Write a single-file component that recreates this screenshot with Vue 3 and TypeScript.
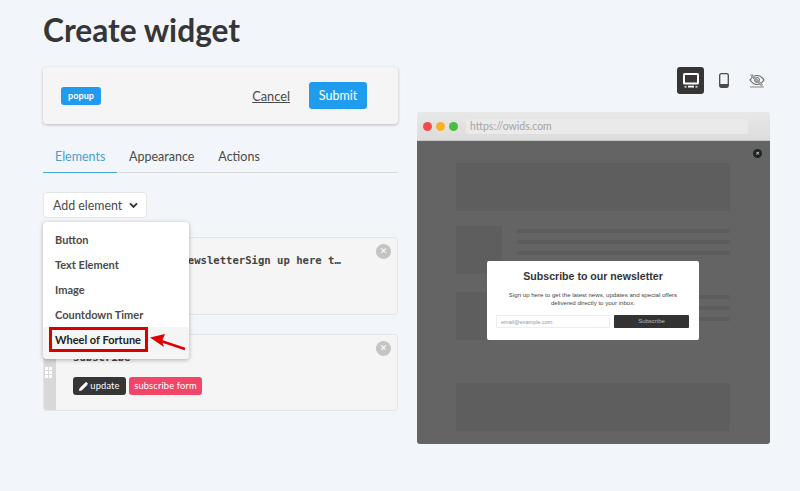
<script setup lang="ts">
const menu: string[] = ['Button', 'Text Element', 'Image', 'Countdown Timer']
const tabs: string[] = ['Elements', 'Appearance', 'Actions']
</script>

<template>
  <div class="page">
    <section class="left">
      <h1 class="title">Create widget</h1>
      <div class="bar">
        <span class="tag">popup</span>
        <a class="cancel">Cancel</a>
        <button class="submit">Submit</button>
      </div>
      <nav class="tabs">
        <span v-for="(t, i) in tabs" :key="t" class="tab" :class="{ active: i === 0 }">{{ t }}</span>
      </nav>
      <div class="add-wrap">
        <button class="add">
          <span>Add element</span>
          <svg width="9" height="7" viewBox="0 0 9 7"><path d="M1 1.400 4.500 4.900 8 1.400" fill="none" stroke="#363636" stroke-width="2" /></svg>
        </button>
        <div class="menu">
          <div v-for="m in menu" :key="m" class="item">{{ m }}</div>
          <div class="item hover"><span class="red-box">Wheel of Fortune</span>
            <svg class="arrow" width="38" height="18" viewBox="0 0 38 18">
              <path d="M36 16 12 8" stroke="#e00000" stroke-width="2.400" fill="none" />
              <path d="M1 4.500 16 1l-3 7 2 6z" fill="#e00000" />
            </svg>
          </div>
        </div>
      </div>
      <div class="cards">
        <div class="card first">
          <div class="grip"><i v-for="n in 6" :key="n"></i></div>
          <div class="card-body">
            <code class="code">Subscribe to our newsletterSign up here t…</code>
          </div>
          <span class="x">✕</span>
        </div>
        <div class="card second">
          <div class="grip"><i v-for="n in 6" :key="n"></i></div>
          <div class="card-body">
            <code class="code">subscribe</code>
            <div class="actions">
              <span class="btn dark">
                <svg width="9" height="9" viewBox="0 0 10 10"><path d="M0 10l.6-3L6.800.8l2.400 2.400L3 9.400zM7.500.2l.6-.2 1.900 1.900-.2.6-.6.6-2.300-2.300z" fill="#fff" /></svg>
                update
              </span>
              <span class="btn pink">subscribe form</span>
            </div>
          </div>
          <span class="x">✕</span>
        </div>
      </div>
    </section>

    <section class="right">
      <div class="toolbar">
        <span class="tool on">
          <svg width="16" height="15" viewBox="0 0 16 15"><path d="M1.500 0h13A1.500 1.500 0 0 1 16 1.500V10a1.500 1.500 0 0 1-1.500 1.500h-13A1.500 1.500 0 0 1 0 10V1.500A1.500 1.500 0 0 1 1.500 0zM2 2v7.500h12V2zM5 12.800h6V14.500H5zM1.500 13.200h2v1.300h-2zM12.500 13.200h2v1.300h-2z" fill="#fff" fill-rule="evenodd" /></svg>
        </span>
        <span class="tool">
          <svg width="10" height="15" viewBox="0 0 10 15"><rect x=".7" y=".7" width="8.600" height="13.600" rx="1.500" fill="none" stroke="#4a4a4a" stroke-width="1.300" /><rect x="1" y="11" width="8" height="3" fill="#4a4a4a" /></svg>
        </span>
        <span class="tool">
          <svg width="16" height="14" viewBox="0 0 16 14">
            <path d="M1 6C3 3 5.300 1.500 8 1.500S13 3 15 6C13 9 10.700 10.500 8 10.500S3 9 1 6z" fill="none" stroke="#666" stroke-width="1.100" />
            <circle cx="8" cy="6" r="2.500" fill="none" stroke="#666" stroke-width="1" />
            <path d="M2.200.8l11 10.500" stroke="#f2f5fa" stroke-width="2.800" />
            <path d="M2.500.2l11.200 10.800M1.500 1.200l11.200 10.800" stroke="#555" stroke-width="1" />
            <path d="M1 13h14" stroke="#999" stroke-width="1.200" />
          </svg>
        </span>
      </div>
      <div class="browser">
        <div class="chrome">
          <i class="dot red"></i><i class="dot amber"></i><i class="dot green"></i>
          <div class="url">https://owids.com</div>
        </div>
        <div class="viewport">
          <span class="close">✕</span>
          <div class="sk hero"></div>
          <div class="sk-row">
            <div class="sk thumb"></div>
            <div class="lines"><i></i><i></i><i></i></div>
          </div>
          <div class="sk-row two">
            <div class="sk thumb"></div>
            <div class="lines"><i></i><i></i><i></i></div>
          </div>
          <div class="sk foot"></div>
          <div class="popup">
            <h2 class="p-title">Subscribe to our newsletter</h2>
            <p class="p-text">Sign up here to get the latest news, updates and special offers delivered directly to your inbox.</p>
            <div class="p-form">
              <span class="p-input">email@example.com</span>
              <span class="p-btn">Subscribe</span>
            </div>
          </div>
        </div>
      </div>
    </section>
  </div>
</template>

<style>
html, body { margin: 0; background: #f2f5fa; }
</style>

<style scoped>
.page {
  width: 800px; height: 491px; box-sizing: border-box; overflow: hidden;
  display: flex; gap: 19px; padding: 0 30px 0 43px;
  font-family: Lato, "Open Sans", sans-serif; color: #4a4a4a; background: #f2f5fa;
}
.left { width: 355px; flex: none; }
.right { width: 353px; flex: none; padding-top: 67px; }
.title { margin: 0; height: 67px; padding-top: 10px; box-sizing: border-box; font-size: 31.700px; line-height: 40px; font-weight: 700; color: #363636; }
.bar {
  height: 57px; box-sizing: border-box; display: flex; align-items: center;
  padding: 0 31px 0 18px; background: #f5f5f5; border-radius: 4px;
  box-shadow: 0 1px 3px rgba(10, 10, 10, .25);
}
.tag { background: #209cee; color: #fff; font-size: 9px; font-weight: 700; letter-spacing: .1px; height: 18px; line-height: 18px; width: 40px; text-align: center; border-radius: 3px; }
.cancel { margin-left: auto; font-size: 12.800px; text-decoration: underline; color: #4a4a4a; }
.submit { margin-left: 19px; width: 58px; height: 27px; padding: 0; border: 0; background: #209cee; color: #fff; font: 12.500px Lato, sans-serif; border-radius: 3px; }
.tabs { display: flex; margin-top: 20px; height: 29px; box-sizing: border-box; border-bottom: 1px solid #dbdbdb; }
.tab { padding: 0 12px; font-size: 12.500px; line-height: 26px; height: 29px; box-sizing: border-box; }
.tab.active { color: #4a9fd0; border-bottom: 1px solid #4aa3d8; width: 74px; }
.add-wrap { position: relative; margin-top: 19px; height: 26px; }
.add {
  display: flex; align-items: center; gap: 7px; height: 26px; width: 104px; box-sizing: border-box; white-space: nowrap;
  padding: 0 0 0 9px; background: #fff; border: 1px solid #e4e6ea; border-radius: 4px;
  font: 12.400px Lato, sans-serif; color: #4a4a4a;
}
.menu {
  position: absolute; left: 0; top: 30px; z-index: 2; width: 146px; height: 137px; box-sizing: border-box;
  padding-top: 5px; background: #fff; border-radius: 4px; box-shadow: 0 1px 4px rgba(10, 10, 10, .3);
}
.item { position: relative; height: 25px; line-height: 25px; padding-left: 12px; font-size: 11px; font-weight: 700; color: #4a4a4a; }
.item.hover { background: #f5f5f5; height: 32px; line-height: 25px; color: #222; border-radius: 0 0 4px 4px; }
.red-box {
  position: absolute; left: 6px; top: 0; width: 99px; height: 25px; line-height: 20px; box-sizing: border-box;
  border: 3px solid #d90000; padding-left: 3px; white-space: nowrap;
}
.arrow { position: absolute; left: 106px; top: 6px; }
.cards { margin-top: 19px; display: flex; flex-direction: column; gap: 19px; width: 355px; }
.card { position: relative; display: flex; box-sizing: border-box; background: #f5f5f5; border: 1px solid #e3e5e9; border-radius: 3px; overflow: hidden; }
.first { height: 78px; }
.second { height: 77px; }
.grip { width: 12px; flex: none; background: #d8d8d8; display: grid; grid-template-columns: 3px 3px; grid-auto-rows: 3px; gap: 1px; padding: 32px 0 0 1px; box-sizing: border-box; align-content: start; }
.grip i { background: #fff; }
.card-body { padding: 14px 0 0 17px; flex: 1; min-width: 0; }
.code { display: block; font: 700 10.600px/16px "DejaVu Sans Mono", monospace; color: #444; white-space: nowrap; }
.actions { display: flex; gap: 3px; margin-top: 12px; }
.btn { height: 18px; line-height: 18px; font-size: 9.300px; letter-spacing: .15px; border-radius: 3px; color: #fff; text-align: center; box-sizing: border-box; }
.dark { width: 53px; background: #363636; display: flex; align-items: center; justify-content: center; gap: 2px; }
.pink { width: 73px; background: #f14668; }
.x { position: absolute; right: 6px; top: 6px; width: 15px; height: 15px; border-radius: 50%; background: #c4c4c4; color: #fff; font: 700 9px/15px "DejaVu Sans", sans-serif; text-align: center; }
.toolbar { display: flex; justify-content: flex-end; height: 27px; }
.tool { width: 27px; height: 27px; margin-left: 6px; display: flex; align-items: center; justify-content: center; border-radius: 3px; }
.tool.on { background: #363636; }
.browser { margin-top: 18px; height: 332px; border-radius: 3px; overflow: hidden; display: flex; flex-direction: column; }
.chrome { height: 29px; flex: none; display: flex; align-items: center; gap: 4px; padding-left: 6px; box-sizing: border-box; background: linear-gradient(#e8e8e8, #dcdcdc); border-bottom: 1px solid #c8c8c8; }
.dot { width: 9px; height: 9px; border-radius: 50%; }
.red { background: #f44a4a; }
.amber { background: #f9b02e; }
.green { background: #45c03e; }
.url { margin-left: 4px; width: 282px; height: 15px; line-height: 15px; padding-left: 4px; box-sizing: border-box; border-radius: 2px; background: #ebe9e9; color: #a5a5a5; font-size: 10.500px; }
.viewport { position: relative; flex: 1; background: #646464; padding: 22px 40px 0 39px; box-sizing: border-box; }
.sk { background: #5e5e5e; }
.hero { height: 48px; }
.sk-row { display: flex; gap: 15px; margin-top: 15px; }
.sk-row.two { margin-top: 18px; }
.thumb { width: 46px; height: 48px; flex: none; }
.lines { flex: 1; display: flex; flex-direction: column; gap: 7px; padding-top: 3px; }
.lines i { height: 4px; background: #5c5c5c; }
.foot { height: 48px; margin-top: 43px; }
.close { position: absolute; right: 8px; top: 8px; width: 9px; height: 9px; border-radius: 50%; background: #222; color: #fff; font: 700 5px/9px "DejaVu Sans", sans-serif; text-align: center; }
.popup { position: absolute; left: 70px; top: 120px; width: 212px; height: 79px; box-sizing: border-box; background: #fff; border-radius: 2px; padding: 8px 9px 0; text-align: center; color: #444; font-family: "Liberation Sans", sans-serif; }
.p-title { margin: 0; font-size: 10.600px; line-height: 14px; font-weight: 700; color: #333; }
.p-text { margin: 8px auto 0; width: 182px; font-size: 6.100px; line-height: 7.500px; }
.p-form { display: flex; gap: 4px; margin-top: 9px; }
.p-input { width: 114px; height: 13px; line-height: 12px; box-sizing: border-box; border: 1px solid #eee; text-align: left; padding-left: 4px; font-size: 5.500px; color: #999; }
.p-btn { width: 75px; height: 13px; line-height: 13px; background: #333; color: #bbb; font-size: 6px; border-radius: 1px; }
</style>
